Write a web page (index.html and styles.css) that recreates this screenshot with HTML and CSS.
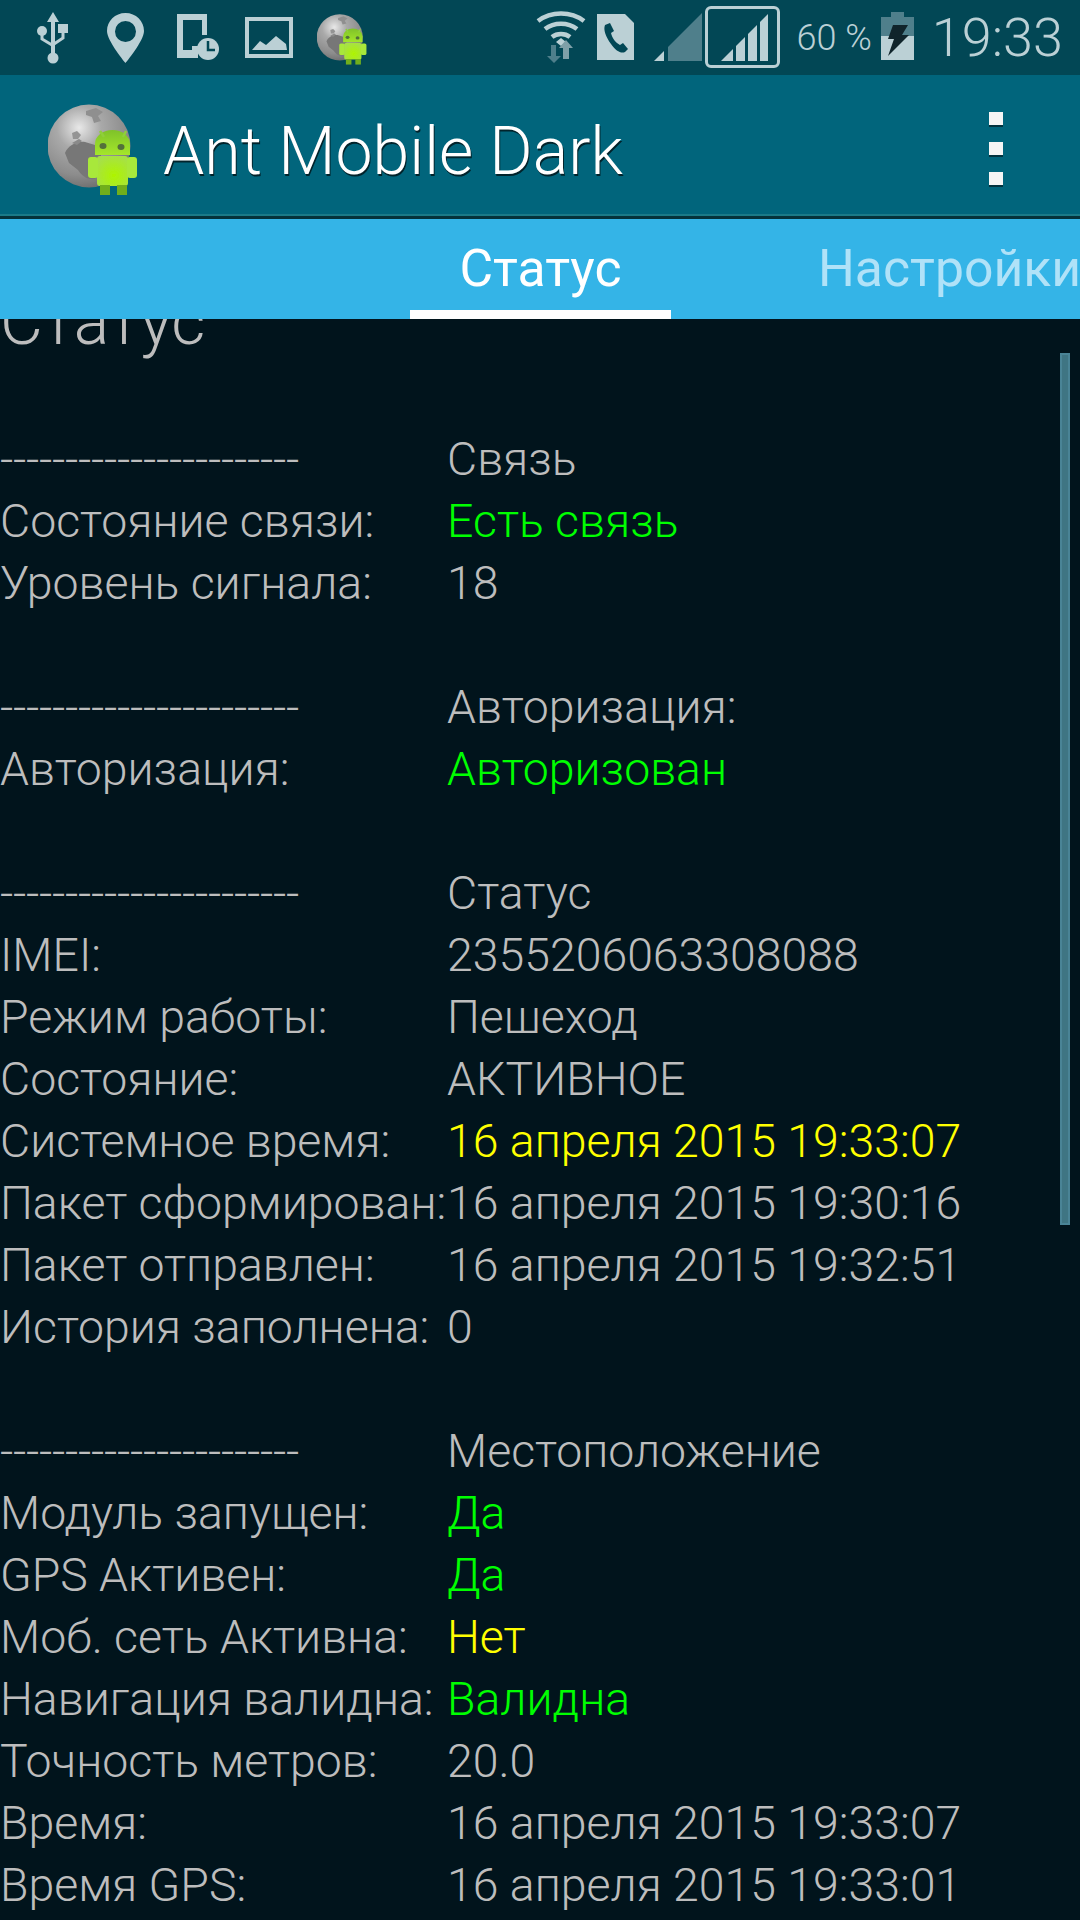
FILE: index.html
```html
<!DOCTYPE html>
<html lang="en">

<head>
	<meta charset="UTF-8">
	<meta name="viewport" content="width=device-width, initial-scale=1.0">
	<title>Ant Mobile Dark</title>
	<link rel="stylesheet" href="styles.css">
</head>

<body>
	<svg class="defs" width="0" height="0">
		<defs>
			<radialGradient id="globe-fill" cx="38%" cy="28%" r="76%">
				<stop offset="0" stop-color="#e8e8e8" />
				<stop offset="0.35" stop-color="#a9a9a9" />
				<stop offset="0.75" stop-color="#8c8c8c" />
				<stop offset="1" stop-color="#6c6c6c" />
			</radialGradient>
			<linearGradient id="droid-head" x1="0" y1="0" x2="0" y2="1">
				<stop offset="0" stop-color="#7fc22a" />
				<stop offset="1" stop-color="#a4e62a" />
			</linearGradient>
			<radialGradient id="droid-body" cx="55%" cy="65%" r="70%">
				<stop offset="0" stop-color="#aef400" />
				<stop offset="1" stop-color="#a6e04a" />
			</radialGradient>
			<filter id="soft" x="-5%" y="-5%" width="110%" height="110%">
				<feGaussianBlur stdDeviation="0.7" />
			</filter>
			<symbol id="logo" viewBox="0 0 90 92">
				<g filter="url(#soft)">
					<circle cx="41" cy="43" r="41.500" fill="url(#globe-fill)" />
					<path d="M17 50c3-7 11-12 20-11l10 3 6 6v18l-6 10c-8 1-13-3-17-9l-9-7z" fill="#777" />
					<path d="M24 40l7-4 3 2-5 4z" fill="#8a8a8a" />
					<path d="M38 8l10-3 7 4-5 4 3 5-7 2-2-6-6-2z" fill="#8f8f8f" />
					<path d="M24 30l5-2 4 4-3 4h-5z" fill="#949494" />
					<path d="M47 41a17.500 14 0 0 1 35 0v11H47z" fill="url(#droid-head)" />
					<path d="M52 28l4 6M78 28l-3 6" stroke="#8fcf3a" stroke-width="2.500" />
					<ellipse cx="55" cy="43" rx="3.500" ry="3" fill="#52703a" />
					<ellipse cx="73" cy="44" rx="3.500" ry="3" fill="#52703a" />
					<rect x="49" y="53" width="31" height="30" rx="3" fill="url(#droid-body)" />
					<rect x="40" y="54" width="10" height="21" rx="3" fill="#a8e83a" />
					<rect x="79" y="54" width="10" height="21" rx="3" fill="#a8e83a" />
					<rect x="52" y="82" width="10" height="10" fill="#6fae1e" />
					<rect x="69" y="82" width="10" height="10" fill="#6fae1e" />
				</g>
			</symbol>
		</defs>
	</svg>

	<div class="status-bar">
		<svg class="icon icon-usb" viewBox="0 0 31 52">
			<path d="M16 0l6 10h-4v32h-4V10h-4z" />
			<circle cx="16" cy="46" r="5.500" />
			<circle cx="5" cy="19" r="5" />
			<rect x="21" y="12" width="10" height="9" />
			<path d="M5 19v8l10 6M26 20v6l-9 6" fill="none" stroke="#bbd0d5" stroke-width="3" />
		</svg>
		<svg class="icon icon-pin" viewBox="0 0 37 50">
			<path fill-rule="evenodd" d="M18.500 0C8 0 0 8 0 18c0 10 18.500 32 18.500 32S37 28 37 18C37 8 29 0 18.500 0zm0 8a10.500 10.500 0 1 1 0 21 10.500 10.500 0 0 1 0-21z" />
		</svg>
		<svg class="icon icon-device" viewBox="0 0 42 47">
			<path fill-rule="evenodd" d="M0 0h30v21h-5V6H6v30h9v-4h6v12H0z" />
			<circle cx="31" cy="35" r="11" />
			<path d="M31 27v9h7" fill="none" stroke="#024755" stroke-width="2.500" />
		</svg>
		<svg class="icon icon-image" viewBox="0 0 48 41">
			<rect x="2" y="2" width="44" height="37" fill="none" stroke="#bbd0d5" stroke-width="4" />
			<path d="M7 33l8-9 6 4 10-9 10 8 1 6z" />
		</svg>
		<svg class="icon icon-app">
			<use href="#logo" />
		</svg>

		<div class="status-right">
			<svg class="icon icon-wifi" viewBox="0 0 50 53">
				<g fill="none" stroke="#bbd0d5" stroke-width="4.500">
					<path d="M2 11c13-10 33-10 46 0" />
					<path d="M9 19c9-7 23-7 32 0" />
					<path d="M16 27c5-4 13-4 18 0" />
				</g>
				<path d="M25 28l5 4-5 4-5-4z" />
				<path d="M15 35h5v11h5l-7 7-7-7h4z" fill="#4f7f8b" />
				<path d="M30 30l7 8h-4v11h-6V38h-4z" fill="#7fa0a8" />
			</svg>
			<svg class="icon icon-sim" viewBox="0 0 37 46">
				<path d="M0 0h28l9 9v37H0z" />
				<path d="M8 11l5-2 4 8-3 2c1 5 5 10 9 12l3-2 5 6-3 3c-4 2-9-1-14-8S6 16 8 11z" fill="#024755" />
			</svg>
			<svg class="icon icon-signal-a" viewBox="0 0 48 48">
				<path d="M0 48l10-10v10z" />
				<path d="M14 34L48 0v48H14z" fill="#4f7f8b" />
			</svg>
			<div class="signal-box">
				<svg class="icon icon-signal-b" viewBox="0 0 47 47">
					<path d="M0 47l12-12v12z" />
					<path d="M15 32l9-9v24h-9z" />
					<path d="M27 20l9-9v36h-9z" />
					<path d="M39 8l8-8v47h-8z" />
				</svg>
			</div>
			<span class="battery-text">60 %</span>
			<svg class="icon icon-battery" viewBox="0 0 33 48">
				<path d="M10 0h13v5h10v19H0V5h10z" fill="#4f7f8b" />
				<path d="M0 24h33v24H0z" />
				<path d="M12 13h15l-6 10h7L7 44l6-17H7z" fill="#10242b" />
			</svg>
			<span class="clock">19:33</span>
		</div>
	</div>

	<div class="action-bar">
		<svg class="logo">
			<use href="#logo" />
		</svg>
		<h1 class="title">Ant Mobile Dark</h1>
		<div class="overflow-menu">
			<div></div>
			<div></div>
			<div></div>
		</div>
	</div>

	<div class="tabs">
		<div class="tab tab-active">Статус</div>
		<div class="tab">Настройки</div>
	</div>

	<div class="content">
		<div class="scrollbar"></div>
		<h2 class="heading">Статус</h2>

		<div class="block">
			<div class="row"><span class="dashes">-----------------------</span><span>Связь</span></div>
			<div class="row"><span>Состояние связи:</span><span class="ok">Есть связь</span></div>
			<div class="row"><span>Уровень сигнала:</span><span>18</span></div>
		</div>

		<div class="block">
			<div class="row"><span class="dashes">-----------------------</span><span>Авторизация:</span></div>
			<div class="row"><span>Авторизация:</span><span class="ok">Авторизован</span></div>
		</div>

		<div class="block">
			<div class="row"><span class="dashes">-----------------------</span><span>Статус</span></div>
			<div class="row"><span>IMEI:</span><span>2355206063308088</span></div>
			<div class="row"><span>Режим работы:</span><span>Пешеход</span></div>
			<div class="row"><span>Состояние:</span><span>АКТИВНОЕ</span></div>
			<div class="row"><span>Системное время:</span><span class="warn">16 апреля 2015 19:33:07</span></div>
			<div class="row"><span>Пакет сформирован:</span><span>16 апреля 2015 19:30:16</span></div>
			<div class="row"><span>Пакет отправлен:</span><span>16 апреля 2015 19:32:51</span></div>
			<div class="row"><span>История заполнена:</span><span>0</span></div>
		</div>

		<div class="block">
			<div class="row"><span class="dashes">-----------------------</span><span>Местоположение</span></div>
			<div class="row"><span>Модуль запущен:</span><span class="ok">Да</span></div>
			<div class="row"><span>GPS Активен:</span><span class="ok">Да</span></div>
			<div class="row"><span>Моб. сеть Активна:</span><span class="warn">Нет</span></div>
			<div class="row"><span>Навигация валидна:</span><span class="ok">Валидна</span></div>
			<div class="row"><span>Точность метров:</span><span>20.0</span></div>
			<div class="row"><span>Время:</span><span>16 апреля 2015 19:33:07</span></div>
			<div class="row"><span>Время GPS:</span><span>16 апреля 2015 19:33:01</span></div>
		</div>
	</div>
</body>

</html>
```

FILE: styles.css
```css
* {
	margin: 0;
	padding: 0;
	box-sizing: border-box;
}

html,
body {
	width: 1080px;
	height: 1920px;
	overflow: hidden;
	font-family: Roboto, 'Noto Sans', sans-serif;
	font-weight: 300;
}

body {
	background: #01141c;
	display: flex;
	flex-direction: column;
}

.defs {
	position: absolute;
}

.status-bar {
	flex: none;
	height: 75px;
	background: #024755;
	display: flex;
	align-items: flex-start;
	color: #bbd0d5;
}

.icon {
	display: block;
	flex: none;
	fill: #bbd0d5;
}

.icon-usb {
	width: 31px;
	height: 52px;
	margin: 12px 0 0 37px;
}

.icon-pin {
	width: 37px;
	height: 50px;
	margin: 13px 0 0 39px;
}

.icon-device {
	width: 42px;
	height: 47px;
	margin: 14px 0 0 33px;
}

.icon-image {
	width: 48px;
	height: 41px;
	margin: 17px 0 0 26px;
}

.icon-app {
	width: 50px;
	height: 52px;
	margin: 13px 0 0 24px;
}

.status-right {
	margin-left: auto;
	padding-right: 17px;
	display: flex;
	align-items: flex-start;
}

.icon-wifi {
	width: 50px;
	height: 53px;
	margin-top: 10px;
}

.icon-sim {
	width: 37px;
	height: 46px;
	margin: 14px 0 0 11px;
}

.icon-signal-a {
	width: 48px;
	height: 48px;
	margin: 13px 0 0 20px;
}

.signal-box {
	width: 75px;
	height: 62px;
	margin: 6px 0 0 3px;
	border: 3px solid #bbd0d5;
	border-radius: 6px;
	padding: 5px 9px 4px 13px;
}

.icon-signal-b {
	width: 47px;
	height: 47px;
}

.battery-text {
	margin: 17px 0 0 17px;
	font-size: 36px;
	line-height: 42px;
	white-space: nowrap;
}

.icon-battery {
	width: 33px;
	height: 48px;
	margin: 12px 0 0 9px;
}

.clock {
	margin: 3px 0 0 18px;
	font-size: 54px;
	line-height: 70px;
}

.action-bar {
	flex: none;
	height: 144px;
	background: #01657c;
	border-bottom: 3px solid #04323b;
	box-shadow: inset 0 -2px 0 #1b7a88;
	display: flex;
	align-items: flex-start;
}

.logo {
	width: 90px;
	height: 92px;
	margin: 28px 0 0 48px;
}

.title {
	margin: 38px 0 0 25px;
	font-size: 66.200px;
	line-height: 78px;
	font-weight: 300;
	color: #fff;
	text-shadow: 1px 2px 0 #02232b;
	white-space: nowrap;
}

.overflow-menu {
	margin: 37px 77px 0 auto;
	display: flex;
	flex-direction: column;
	gap: 17px;
}

.overflow-menu div {
	width: 14px;
	height: 13px;
	background: #f5f5f5;
	box-shadow: 0 2px 0 #02333f;
}

.tabs {
	flex: none;
	height: 100px;
	background: #34b4e7;
	display: flex;
	padding-left: 410px;
	overflow: hidden;
}

.tab {
	flex: none;
	width: 261px;
	font-size: 51.700px;
	font-weight: 400;
	line-height: 99px;
	text-align: center;
	color: #b0e2f8;
}

.tab + .tab {
	margin-left: 147px;
	text-align: left;
}

.tab-active {
	color: #fff;
	border-bottom: 9px solid #fff;
}

.content {
	position: relative;
	flex: 1;
	overflow: hidden;
	color: #bdbdbd;
	font-size: 46.400px;
	line-height: 62px;
}

.scrollbar {
	position: absolute;
	top: 34px;
	right: 10px;
	width: 10px;
	height: 872px;
	background: #3f7583;
	border: 2px solid #4a8496;
}

.heading {
	margin-top: -35px;
	height: 144px;
	font-size: 66px;
	line-height: 76px;
	font-weight: 300;
}

.block {
	margin-bottom: 62px;
}

.row {
	display: grid;
	grid-template-columns: 447px 1fr;
	white-space: nowrap;
}

.dashes {
	letter-spacing: -0.300px;
}

.ok {
	color: #00ff00;
}

.warn {
	color: #ffff00;
}
```
